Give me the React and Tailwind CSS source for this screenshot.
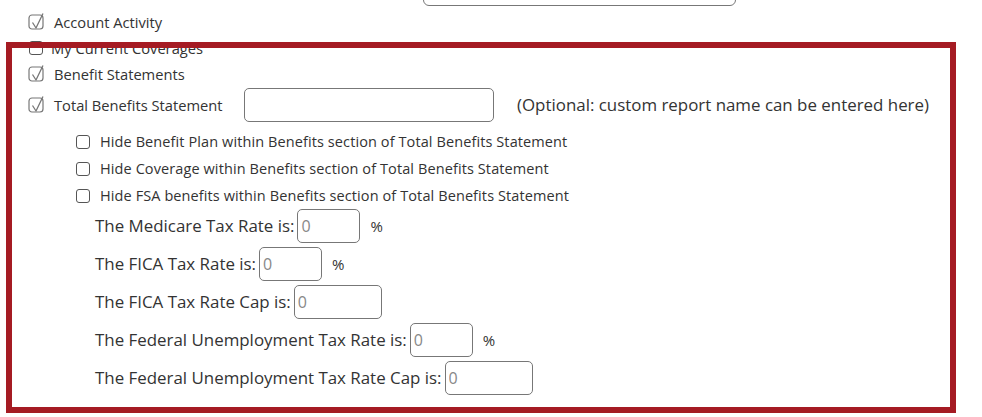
import React from 'react';

const font = { fontFamily: '"Open Sans", "Noto Sans", sans-serif' };

function CheckedBox() {
  return (
    <svg width="18" height="18" viewBox="0 0 18 18" className="shrink-0">
      <rect x="1" y="2" width="14" height="14" rx="3" fill="white" stroke="#777" strokeWidth="1.2" />
      <path d="M4.5 9.5 L8 15 L15 0.5" fill="none" stroke="#777" strokeWidth="1.3" strokeLinejoin="round" />
    </svg>
  );
}

function EmptyBox() {
  return <span className="block h-[14px] w-[14px] shrink-0 rounded-[3px] border border-[#555] bg-white" />;
}

function TopCheck({ label, checked = true }) {
  return (
    <div className="flex h-[26px] items-center pl-[28px]">
      {checked ? <CheckedBox /> : <span className="ml-px"><EmptyBox /></span>}
      <span className="ml-[8px] text-[14.7px] text-[#333]">{label}</span>
    </div>
  );
}

function SubCheck({ label }) {
  return (
    <div className="flex h-[27px] items-center pl-[76px]">
      <EmptyBox />
      <span className="ml-[10px] text-[14.5px] tracking-[0.1px] text-[#333]">{label}</span>
    </div>
  );
}

function TaxRow({ label, wide, pct }) {
  return (
    <div className="flex h-[34px] items-center pl-[95px]">
      <span className="text-[16.9px] text-[#333]">{label}</span>
      <input
        readOnly
        placeholder="0"
        className={
          'ml-[3px] h-[34px] rounded-[5px] border border-[#777] px-[3px] text-[16px] text-[#888] placeholder:text-[#888] outline-none ' +
          (wide ? 'w-[88px]' : 'w-[63px]')
        }
      />
      {pct && <span className="ml-[10px] text-[15px] text-[#333]">%</span>}
    </div>
  );
}

export default function App() {
  return (
    <div className="relative h-[417px] w-[982px] overflow-hidden bg-white" style={font}>
      <div className="flex h-[6px] items-end overflow-hidden">
        <div className="ml-[423px] h-[36px] w-[313px] shrink-0 rounded-[6px] border border-[#777]" />
      </div>
      <div className="pt-[3px]">
        <TopCheck label="Account Activity" />
        <TopCheck label="My Current Coverages" checked={false} />
        <TopCheck label="Benefit Statements" />
        <div className="flex h-[36px] items-center pl-[28px]">
          <CheckedBox />
          <span className="ml-[8px] w-[190px] text-[14.7px] text-[#333]">Total Benefits Statement</span>
          <input readOnly className="h-[34px] w-[250px] rounded-[5px] border border-[#777] outline-none" />
          <span className="ml-[23px] text-[16.9px] text-[#333]">(Optional: custom report name can be entered here)</span>
        </div>
        <div className="pt-[5px]">
          <SubCheck label="Hide Benefit Plan within Benefits section of Total Benefits Statement" />
          <SubCheck label="Hide Coverage within Benefits section of Total Benefits Statement" />
          <SubCheck label="Hide FSA benefits within Benefits section of Total Benefits Statement" />
        </div>
        <div className="flex flex-col gap-[4px]">
          <TaxRow label="The Medicare Tax Rate is:" pct />
          <TaxRow label="The FICA Tax Rate is:" pct />
          <TaxRow label="The FICA Tax Rate Cap is:" wide />
          <TaxRow label="The Federal Unemployment Tax Rate is:" pct />
          <TaxRow label="The Federal Unemployment Tax Rate Cap is:" wide />
        </div>
      </div>
      <div className="pointer-events-none absolute left-[6px] top-[42px] h-[371px] w-[950px] border-[6px] border-[#a51b23]" />
    </div>
  );
}
